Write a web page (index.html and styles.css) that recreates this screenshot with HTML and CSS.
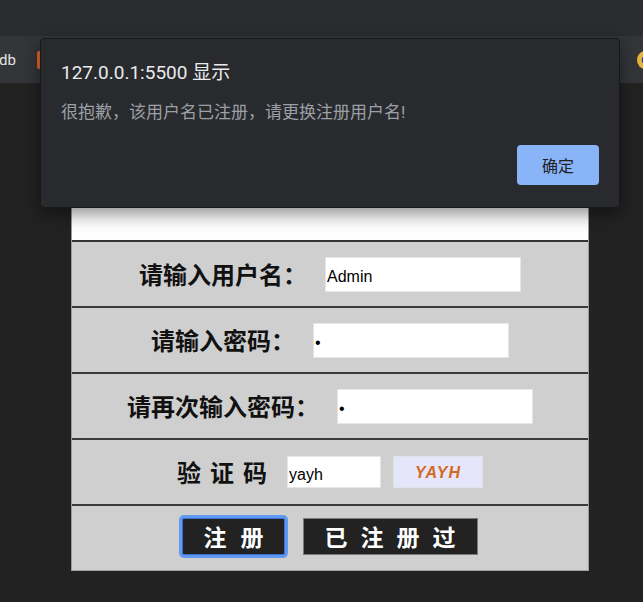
FILE: index.html
```html
<!DOCTYPE html>
<html lang="zh">
<head>
<meta charset="utf-8">
<title>注册</title>
<link rel="stylesheet" href="styles.css">
</head>
<body>
<header class="chrome">
  <div class="tabstrip"></div>
  <div class="bookmarks">
    <span class="bm-text">db</span>
    <span class="bm-icon-orange"></span>
    <span class="bm-spacer"></span>
    <span class="bm-icon-round"></span>
  </div>
</header>

<main class="page">
  <div class="form">
    <div class="title-row"></div>
    <div class="row">
      <label class="label">请输入用户名：</label>
      <input class="field" type="text" value="Admin">
    </div>
    <div class="row">
      <label class="label">请输入密码：</label>
      <input class="field" type="password" value="1">
    </div>
    <div class="row">
      <label class="label">请再次输入密码：</label>
      <input class="field" type="password" value="1">
    </div>
    <div class="row">
      <label class="label label-spaced">验证码</label>
      <input class="field field-code" type="text" value="yayh">
      <span class="captcha">YAYH</span>
    </div>
    <div class="row row-last">
      <button class="btn btn-focus" type="button">注册</button>
      <button class="btn btn-wide" type="button">已注册过</button>
    </div>
  </div>
</main>

<div class="dialog" role="alertdialog">
  <div class="dialog-title">127.0.0.1:5500 显示</div>
  <div class="dialog-msg">很抱歉，该用户名已注册，请更换注册用户名!</div>
  <div class="dialog-actions">
    <button class="dialog-btn" type="button">确定</button>
  </div>
</div>
</body>
</html>
```

FILE: styles.css
```css
* { box-sizing: border-box; }

html, body {
  margin: 0;
  padding: 0;
  width: 643px;
  height: 602px;
  overflow: hidden;
  background: #222222;
  font-family: "Noto Sans CJK SC", "Noto Sans", sans-serif;
}

.chrome {
  display: flex;
  flex-direction: column;
}

.tabstrip {
  height: 36px;
  background: #2a2c30;
}

.bookmarks {
  height: 47px;
  background: #333539;
  display: flex;
  align-items: center;
  overflow: hidden;
}

.bm-text {
  color: #e3e3e3;
  font-family: "Roboto", "Noto Sans", sans-serif;
  font-size: 15px;
  margin-left: -1px;
}

.bm-icon-orange {
  width: 6px;
  height: 18px;
  margin-left: 21px;
  background: #e0662a;
  border-radius: 2px;
}

.bm-spacer { flex: 1; }

.bm-icon-round {
  width: 16px;
  height: 18px;
  margin-right: -10px;
  border-radius: 50%;
  background: radial-gradient(circle at 60% 50%, #2b3fa0 0 35%, #e6b437 40% 100%);
}

.page {
  padding-top: 68px;
}

.form {
  margin-left: 71px;
  width: 518px;
  border-left: 1px solid #9a9a9a;
  border-right: 1px solid #9a9a9a;
}

.title-row {
  height: 91px;
  background: #ffffff;
  border-bottom: 2px solid #333333;
}

.row {
  height: 66px;
  background: #cfcfcf;
  border-bottom: 2px solid #3a3a3a;
  display: flex;
  align-items: center;
  justify-content: center;
  gap: 18px;
}

.row-last {
  height: 65px;
  border-bottom: 1px solid #a0a0a0;
  padding-bottom: 4px;
}

.label {
  font-size: 24px;
  font-weight: 700;
  color: #111111;
  line-height: 30px;
}

.label-spaced {
  letter-spacing: 9px;
  margin-right: -8px;
}

.field {
  width: 196px;
  height: 35px;
  margin: 0;
  padding: 6px 1px 0;
  border: 1px solid #e6e6e6;
  background: #ffffff;
  font-family: "Liberation Sans", Arial, sans-serif;
  font-size: 16px;
  color: #000000;
  outline: none;
}

.field-code {
  width: 94px;
  height: 32px;
  margin-left: 1px;
  padding-top: 5px;
}

.captcha {
  width: 90px;
  height: 32px;
  margin-left: -6px;
  background: #e6e6fa;
  border: 1px solid #e2e2ea;
  color: #d2691e;
  font-family: "Liberation Sans", Arial, sans-serif;
  font-size: 16px;
  font-weight: 700;
  font-style: italic;
  letter-spacing: 1px;
  padding-top: 2px;
  display: flex;
  align-items: center;
  justify-content: center;
}

.btn {
  height: 37px;
  margin: 0;
  padding: 0 0 0 14px;
  background: #222222;
  border: 1px solid #7a7a7a;
  color: #ffffff;
  font-family: "Noto Sans CJK SC", sans-serif;
  font-size: 23px;
  font-weight: 700;
  letter-spacing: 14px;
  line-height: 35px;
  cursor: pointer;
}

.btn-focus {
  width: 103px;
  border-color: #3c6fd0;
  border-radius: 2px;
  box-shadow: 0 0 0 3px #5f9af0;
}

.btn-wide {
  width: 175px;
  letter-spacing: 13px;
  padding-left: 12px;
}

.dialog {
  position: absolute;
  left: 40px;
  top: 38px;
  width: 580px;
  height: 170px;
  padding: 22px 20px 21px 20px;
  background: #292a2d;
  border: 1px solid #17181a;
  border-radius: 4px;
  box-shadow: 0 6px 18px rgba(0, 0, 0, 0.45);
  display: flex;
  flex-direction: column;
}

.dialog-title {
  font-family: "Roboto", "Noto Sans CJK SC", sans-serif;
  font-size: 19px;
  line-height: 24px;
  color: #e8eaed;
}

.dialog-msg {
  margin-top: 15px;
  font-family: "Roboto", "Noto Sans CJK SC", sans-serif;
  font-size: 17px;
  line-height: 24px;
  color: #9aa0a6;
}

.dialog-actions {
  margin-top: 21px;
  display: flex;
  justify-content: flex-end;
}

.dialog-btn {
  width: 82px;
  height: 40px;
  margin: 0;
  border: none;
  border-radius: 4px;
  background: #8ab4f8;
  color: #202124;
  font-family: "Noto Sans CJK SC", sans-serif;
  font-size: 16px;
  cursor: pointer;
}
```
